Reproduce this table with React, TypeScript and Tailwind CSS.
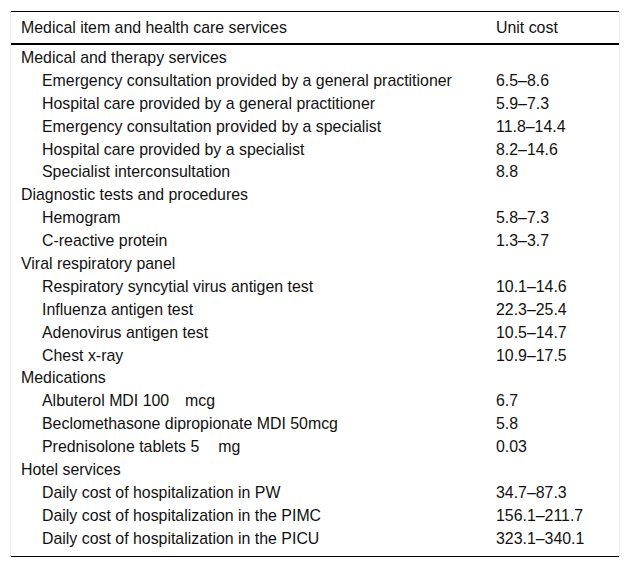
import React from "react";

type Row = { label: string; cost?: string; sub?: boolean };

const rows: Row[] = [
  { label: "Medical and therapy services" },
  { label: "Emergency consultation provided by a general practitioner", cost: "6.5–8.6", sub: true },
  { label: "Hospital care provided by a general practitioner", cost: "5.9–7.3", sub: true },
  { label: "Emergency consultation provided by a specialist", cost: "11.8–14.4", sub: true },
  { label: "Hospital care provided by a specialist", cost: "8.2–14.6", sub: true },
  { label: "Specialist interconsultation", cost: "8.8", sub: true },
  { label: "Diagnostic tests and procedures" },
  { label: "Hemogram", cost: "5.8–7.3", sub: true },
  { label: "C-reactive protein", cost: "1.3–3.7", sub: true },
  { label: "Viral respiratory panel" },
  { label: "Respiratory syncytial virus antigen test", cost: "10.1–14.6", sub: true },
  { label: "Influenza antigen test", cost: "22.3–25.4", sub: true },
  { label: "Adenovirus antigen test", cost: "10.5–14.7", sub: true },
  { label: "Chest x-ray", cost: "10.9–17.5", sub: true },
  { label: "Medications" },
  { label: "Albuterol MDI 100\u2003mcg", cost: "6.7", sub: true },
  { label: "Beclomethasone dipropionate MDI 50mcg", cost: "5.8", sub: true },
  { label: "Prednisolone tablets 5\u2003\u2009mg", cost: "0.03", sub: true },
  { label: "Hotel services" },
  { label: "Daily cost of hospitalization in PW", cost: "34.7–87.3", sub: true },
  { label: "Daily cost of hospitalization in the PIMC", cost: "156.1–211.7", sub: true },
  { label: "Daily cost of hospitalization in the PICU", cost: "323.1–340.1", sub: true },
];

const App = () => {
  return (
    <div className="bg-white w-[631px] h-[568px] pt-[11px] pl-[10px] font-['Liberation_Sans',Arial,sans-serif] text-[15.9px] leading-[18px] text-[#111]">
      <div className="w-[610px] border-x border-[#ececec]">
        <table className="w-full border-collapse">
          <thead>
            <tr className="border-t border-black border-b-2">
              <th className="h-[32px] pl-[10px] pt-[1px] text-left font-normal">Medical item and health care services</th>
              <th className="h-[32px] w-[123px] pt-[1px] text-left font-normal">Unit cost</th>
            </tr>
          </thead>
          <tbody className="border-b border-black">
            {rows.map((r, i) => (
              <tr key={i}>
                <td
                  className={`whitespace-pre p-0 ${r.sub ? "pl-[31px]" : "pl-[10px]"} ${
                    i === 0 ? "h-[25.9px] pt-[3px]" : "h-[22.9px]"
                  }`}
                >
                  {r.label}
                </td>
                <td className={`p-0 ${i === 0 ? "h-[25.9px] pt-[3px]" : "h-[22.9px]"}`}>{r.cost}</td>
              </tr>
            ))}
            <tr>
              <td className="h-[6px]" />
              <td />
            </tr>
          </tbody>
        </table>
      </div>
    </div>
  );
};

export default App;
